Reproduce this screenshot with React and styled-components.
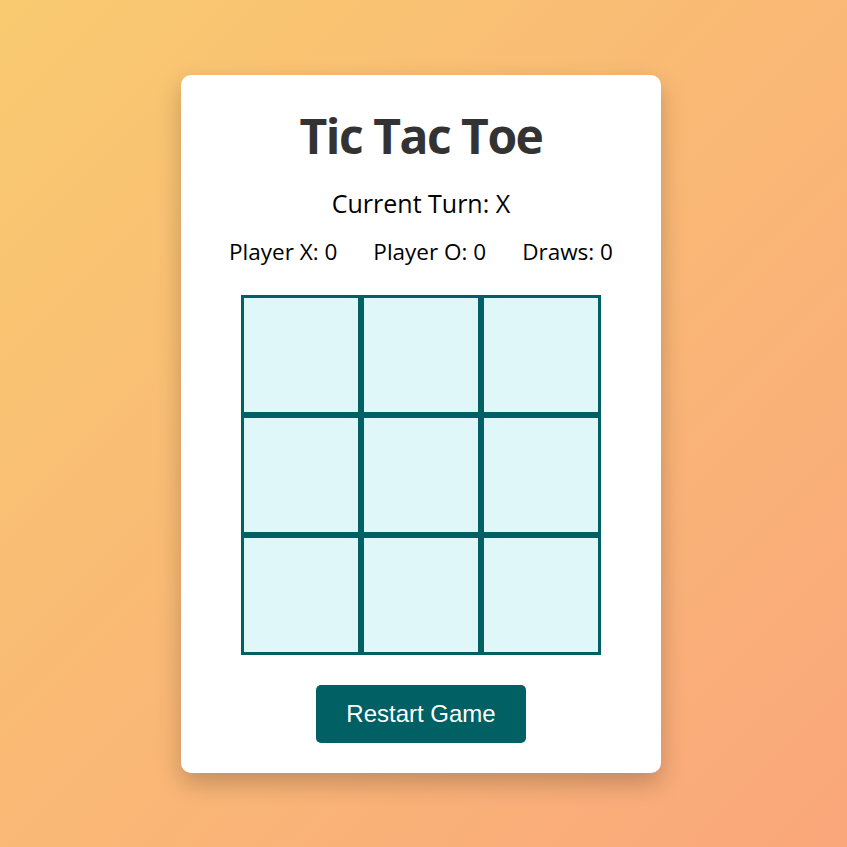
import React from "react";
import styled, { createGlobalStyle } from "styled-components";

const GlobalStyle = createGlobalStyle`
  html, body {
    margin: 0;
    padding: 0;
  }
  body {
    font-family: "Open Sans", "Noto Sans", sans-serif;
    background: linear-gradient(135deg, #f9ca70 0%, #faa77b 100%);
    min-height: 100vh;
  }
`;

function App() {
  const [board, setBoard] = React.useState(Array(9).fill(null));
  const [turn, setTurn] = React.useState("X");
  const [scores] = React.useState({ x: 0, o: 0, draws: 0 });

  return (
    <>
      <GlobalStyle />
      <Page>
        <Card>
          <Title>Tic Tac Toe</Title>
          <Status>Current Turn: {turn}</Status>
          <Scores>
            <Score>Player X: {scores.x}</Score>
            <Score>Player O: {scores.o}</Score>
            <Score>Draws: {scores.draws}</Score>
          </Scores>
          <Board>
            {board.map((value, i) => (
              <Cell
                key={i}
                onClick={() => {
                  if (value) return;
                  const next = [...board];
                  next[i] = turn;
                  setBoard(next);
                  setTurn(turn === "X" ? "O" : "X");
                }}
              >
                {value}
              </Cell>
            ))}
          </Board>
          <RestartButton
            onClick={() => {
              setBoard(Array(9).fill(null));
              setTurn("X");
            }}
          >
            Restart Game
          </RestartButton>
        </Card>
      </Page>
    </>
  );
}

const Page = styled.div`
  min-height: 100vh;
  display: flex;
  align-items: center;
  justify-content: center;
  padding-right: 5px;
  box-sizing: border-box;
`;

const Card = styled.div`
  width: 480px;
  box-sizing: border-box;
  background: #fff;
  border-radius: 10px;
  padding: 28px 40px 30px;
  box-shadow: 0 10px 24px rgba(0, 0, 0, 0.22);
  display: flex;
  flex-direction: column;
  align-items: center;
`;

const Title = styled.h1`
  margin: 0 0 18px;
  font-size: 48px;
  letter-spacing: -1.5px;
  font-weight: 700;
  color: #333;
`;

const Status = styled.div`
  font-size: 25px;
  color: #000;
  margin-bottom: 16px;
`;

const Scores = styled.div`
  display: flex;
  gap: 36px;
  font-size: 22.5px;
  color: #000;
  margin-bottom: 28px;
`;

const Score = styled.span``;

const Board = styled.div`
  display: grid;
  grid-template-columns: repeat(3, 120px);
  grid-template-rows: repeat(3, 120px);
  margin-bottom: 30px;
`;

const Cell = styled.div`
  box-sizing: border-box;
  border: 3px solid #006064;
  background: #e0f7fa;
  display: flex;
  align-items: center;
  justify-content: center;
  font-size: 48px;
  font-weight: 700;
  color: #006064;
  cursor: pointer;
`;

const RestartButton = styled.button`
  font-family: "Liberation Sans", Arial, sans-serif;
  font-size: 24px;
  padding: 15px 30px;
  border: none;
  border-radius: 5px;
  background: #006064;
  color: #fff;
  cursor: pointer;
`;

export default App;
